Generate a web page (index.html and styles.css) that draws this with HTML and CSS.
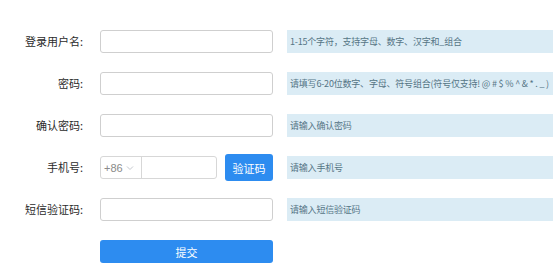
FILE: index.html
```html
<!DOCTYPE html>
<html lang="zh">
<head>
<meta charset="utf-8">
<link rel="stylesheet" href="styles.css">
</head>
<body>
<form class="form">
  <div class="row">
    <label class="label">登录用户名:</label>
    <div class="field"><input class="input" type="text"></div>
    <div class="hint">1-15个字符，支持字母、数字、汉字和_组合</div>
  </div>
  <div class="row">
    <label class="label">密码:</label>
    <div class="field"><input class="input" type="password"></div>
    <div class="hint">请填写6-20位数字、字母、符号组合(符号仅支持! @ # $ % ^ &amp; * . _ )</div>
  </div>
  <div class="row">
    <label class="label">确认密码:</label>
    <div class="field"><input class="input" type="password"></div>
    <div class="hint">请输入确认密码</div>
  </div>
  <div class="row">
    <label class="label">手机号:</label>
    <div class="field phone">
      <div class="group">
        <div class="prefix"><span>+86</span><svg class="chev" width="8" height="6" viewBox="0 0 8 6"><path d="M1 1.5 L4 4.5 L7 1.5" fill="none" stroke="#c5c8ce" stroke-width="1"/></svg></div>
        <input class="phone-input" type="text">
      </div>
      <button type="button" class="code-btn">验证码</button>
    </div>
    <div class="hint">请输入手机号</div>
  </div>
  <div class="row">
    <label class="label">短信验证码:</label>
    <div class="field"><input class="input" type="text"></div>
    <div class="hint">请输入短信验证码</div>
  </div>
  <div class="row">
    <span class="label"></span>
    <div class="field"><button type="button" class="submit">提交</button></div>
  </div>
</form>
</body>
</html>
```
FILE: styles.css
```css
html, body {
  margin: 0;
  padding: 0;
  background: #fff;
  overflow: hidden;
}
body {
  font-family: "Noto Sans CJK SC", "Noto Sans", sans-serif;
  font-size: 11px;
  color: #333;
}
.form {
  display: flex;
  flex-direction: column;
  gap: 19px;
  padding-top: 30px;
}
.row {
  display: flex;
  align-items: center;
  height: 23px;
}
.label {
  width: 83px;
  text-align: right;
  flex: none;
  margin-right: 17px;
  color: #2b2b2b;
  font-size: 11px;
  line-height: 23px;
}
.field {
  width: 173px;
  flex: none;
  display: flex;
  height: 23px;
}
.input {
  box-sizing: border-box;
  width: 100%;
  height: 23px;
  border: 1px solid #cfcfcf;
  border-radius: 3px;
  margin: 0;
  padding: 0 6px;
  outline: none;
  background: #fff;
}
.hint {
  flex: none;
  margin-left: 14px;
  width: 266px;
  height: 23px;
  box-sizing: border-box;
  background: #dbecf5;
  color: #557585;
  font-size: 9px;
  letter-spacing: -0.2px;
  line-height: 23px;
  padding-left: 3px;
  white-space: nowrap;
  overflow: hidden;
}
.phone {
  align-items: center;
  justify-content: space-between;
}
.group {
  display: flex;
  width: 117px;
  height: 23px;
  box-sizing: border-box;
  border: 1px solid #d7d7d7;
  border-radius: 3px;
}
.prefix {
  width: 41px;
  flex: none;
  box-sizing: border-box;
  border-right: 1px solid #d7d7d7;
  display: flex;
  align-items: center;
  gap: 3px;
  padding-left: 3px;
  color: #8a8a8a;
  font-size: 11px;
  font-family: "Liberation Sans", "Noto Sans", sans-serif;
}
.chev {
  display: block;
}
.phone-input {
  flex: 1;
  min-width: 0;
  border: 0;
  margin: 0;
  padding: 0 5px;
  outline: none;
  background: transparent;
}
.code-btn {
  flex: none;
  width: 48px;
  height: 27px;
  margin: -2px 0;
  border: 0;
  border-radius: 3px;
  background: #2d8cf0;
  color: #fff;
  font-family: "Noto Sans CJK SC", sans-serif;
  font-size: 11px;
  padding: 0;
}
.submit {
  width: 100%;
  height: 23px;
  border: 0;
  border-radius: 3px;
  background: #2d8cf0;
  color: #fff;
  font-family: "Noto Sans CJK SC", sans-serif;
  font-size: 11px;
  padding: 0;
}
```
